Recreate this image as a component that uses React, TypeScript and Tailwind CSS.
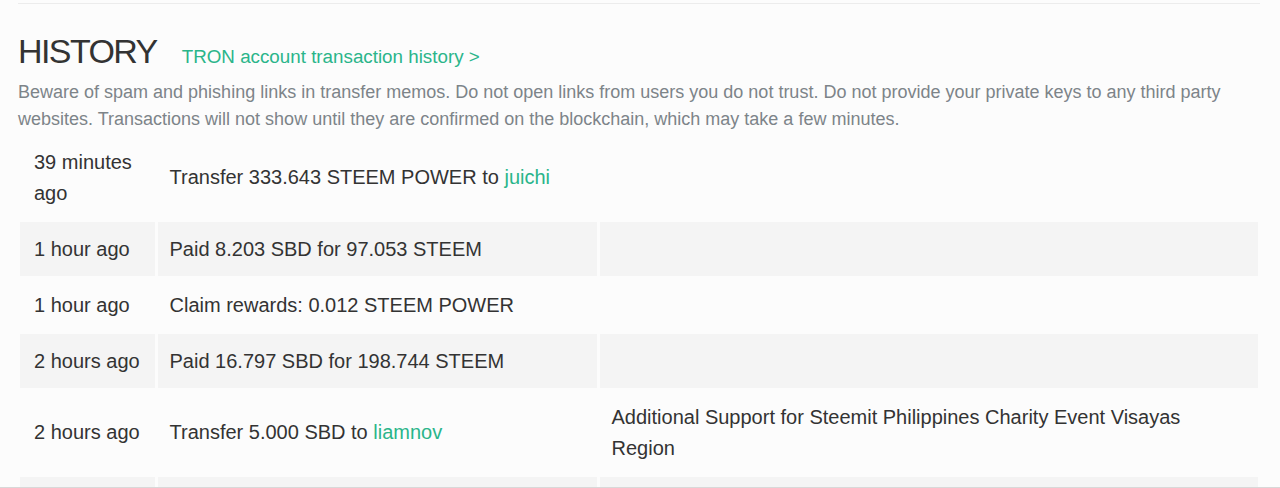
const rows = [
  { when: "39 minutes ago", what: "Transfer 333.643 STEEM POWER to ", link: "juichi", memo: "" },
  { when: "1 hour ago", what: "Paid 8.203 SBD for 97.053 STEEM", memo: "" },
  { when: "1 hour ago", what: "Claim rewards: 0.012 STEEM POWER", memo: "" },
  { when: "2 hours ago", what: "Paid 16.797 SBD for 198.744 STEEM", memo: "" },
  {
    when: "2 hours ago",
    what: "Transfer 5.000 SBD to ",
    link: "liamnov",
    memo: "Additional Support for Steemit Philippines Charity Event Visayas Region",
  },
  { when: "3 hours ago", what: "Paid 4.000 SBD for 47.300 STEEM", memo: "" },
];

export default function App() {
  return (
    <div
      className="h-[488px] overflow-hidden border-b border-[#d8d8d8] bg-[#fcfcfc] text-[#333]"
      style={{ fontFamily: "'Liberation Sans', Arial, sans-serif" }}
    >
      <div className="px-[18px] pt-[3px]">
        <div className="mr-[2px] border-t border-[#ececec]" />

        <div className="flex items-baseline gap-[25px] pt-[27px]">
          <h2 className="text-[34px] leading-[40px] tracking-[-1.6px] text-[#333]">HISTORY</h2>
          <a href="#" className="text-[18.8px] text-[#2ab58a]">
            TRON account transaction history &gt;
          </a>
        </div>

        <p className="mt-[8px] text-[18px] leading-[27px] text-[#7d8489]">
          Beware of spam and phishing links in transfer memos. Do not open links from users you do not trust. Do not
          provide your private keys to any third party websites. Transactions will not show until they are confirmed
          on the blockchain, which may take a few minutes.
        </p>

        <table className="ml-[2px] w-[1238px] table-fixed border-collapse text-[20px] leading-[31px] text-[#333]">
          <colgroup>
            <col className="w-[136px]" />
            <col className="w-[442px]" />
            <col />
          </colgroup>
          <tbody>
            {rows.map((r, i) => (
              <tr key={i} className={i % 2 === 1 ? "bg-[#f4f4f4]" : ""}>
                <td className="border-y-2 border-r-[3px] border-[#fcfcfc] px-[14px] py-[11.5px] align-middle">
                  {r.when}
                </td>
                <td className="border-y-2 border-x-[3px] border-[#fcfcfc] px-[12px] py-[11.5px] align-middle">
                  {r.what}
                  {r.link && (
                    <a href="#" className="text-[#2ab58a]">
                      {r.link}
                    </a>
                  )}
                </td>
                <td className="border-y-2 border-l-[3px] border-[#fcfcfc] py-[11.5px] pl-[12px] pr-[30px] align-middle">
                  {r.memo}
                </td>
              </tr>
            ))}
          </tbody>
        </table>
      </div>
    </div>
  );
}
